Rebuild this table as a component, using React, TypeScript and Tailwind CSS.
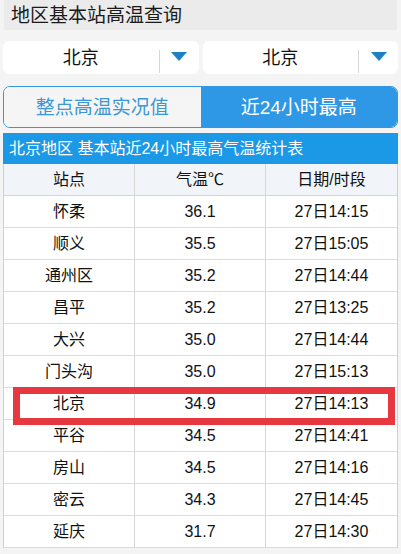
import React from "react";

const rows: [string, string, string][] = [
  ["怀柔", "36.1", "27日14:15"],
  ["顺义", "35.5", "27日15:05"],
  ["通州区", "35.2", "27日14:44"],
  ["昌平", "35.2", "27日13:25"],
  ["大兴", "35.0", "27日14:44"],
  ["门头沟", "35.0", "27日15:13"],
  ["北京", "34.9", "27日14:13"],
  ["平谷", "34.5", "27日14:41"],
  ["房山", "34.5", "27日14:16"],
  ["密云", "34.3", "27日14:45"],
  ["延庆", "31.7", "27日14:30"],
];

const font = { fontFamily: '"Liberation Sans", "Noto Sans CJK SC", sans-serif' };

function Caret() {
  return (
    <svg width="16" height="10" viewBox="0 0 16 10">
      <polygon points="0,0 16,0 8,9" fill="#1d7fc8" />
    </svg>
  );
}

function Select() {
  return (
    <div className="flex h-[33px] flex-1 items-center rounded-[6px] bg-white">
      <div className="flex flex-1 items-center justify-center text-[18px] leading-none text-[#111]">北京</div>
      <div className="h-[23px] w-px self-end mb-[1px] bg-[#d6d6d6]" />
      <div className="flex w-[39px] items-center justify-center pb-[1px]">
        <Caret />
      </div>
    </div>
  );
}

export default function App() {
  return (
    <div className="w-[401px] h-[554px] overflow-hidden bg-[#f4f4f4]" style={font}>
      <div className="mx-[4px] flex h-[30px] items-center bg-[#ebebeb] pl-[7px] text-[19px] leading-none text-[#1a1a1a]">
        地区基本站高温查询
      </div>
      <div className="mt-[11px] flex gap-[4px] px-[3px]">
        <Select />
        <Select />
      </div>
      <div className="mx-[3px] mt-[12px] flex h-[42px] overflow-hidden rounded-[7px] border border-[#3597e0]">
        <div className="flex flex-1 items-center justify-center bg-[#f5f5f5] text-[19px] leading-none text-[#3b97d6]">
          整点高温实况值
        </div>
        <div className="flex flex-1 items-center justify-center bg-[#2f98e6] text-[19px] leading-none text-white">
          近24小时最高
        </div>
      </div>
      <div className="mx-[3px] mt-[5px]">
        <div className="flex h-[31px] items-center bg-[#1b98e6] pl-[6px] text-[16px] leading-none text-white">
          北京地区 基本站近24小时最高气温统计表
        </div>
        <div className="border-l border-r border-[#d0d0d0]">
          <div className="grid h-[32px] grid-cols-3 border-b border-[#d6d6d6] bg-[#f1f5fa] text-[16px] leading-none text-[#111]">
            <div className="flex items-center justify-center border-r border-[#d6d6d6]">站点</div>
            <div className="flex items-center justify-center border-r border-[#d6d6d6]">气温℃</div>
            <div className="flex items-center justify-center">日期/时段</div>
          </div>
          {rows.map((r, i) => (
            <div
              key={i}
              className="relative grid h-[32px] grid-cols-3 border-b border-[#dcdcdc] bg-white text-[16px] leading-none text-[#111]"
            >
              <div className="flex items-center justify-center border-r border-[#d6d6d6]">{r[0]}</div>
              <div className="flex items-center justify-center border-r border-[#d6d6d6]">{r[1]}</div>
              <div className="flex items-center justify-center">{r[2]}</div>
              {r[0] === "北京" && (
                <div className="pointer-events-none absolute left-[9px] top-[-1px] z-10 h-[38px] w-[382px] border-[7px] border-[#e8383f]" />
              )}
            </div>
          ))}
        </div>
      </div>
    </div>
  );
}
